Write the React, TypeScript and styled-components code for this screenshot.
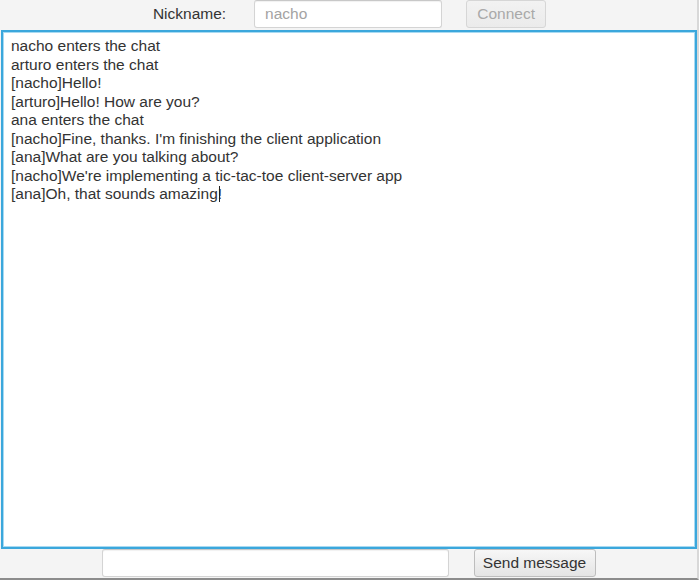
import React from "react";
import styled, { createGlobalStyle } from "styled-components";

const Global = createGlobalStyle`
  html, body { margin: 0; padding: 0; background: #f4f4f4; }
  body { font-family: "Liberation Sans", Arial, sans-serif; }
  * { box-sizing: border-box; }
`;

const Window = styled.div`
  width: 699px;
  height: 580px;
  display: flex;
  flex-direction: column;
  background: #f4f4f4;
  border-bottom: 2px solid #8c8c8c;
  border-right: 2px solid #d8d8d8;
  overflow: hidden;
`;

const Bar = styled.div<{ $h: number }>`
  height: ${(p) => p.$h}px;
  display: flex;
  justify-content: center;
  align-items: flex-start;
  flex-shrink: 0;
`;

const Label = styled.span`
  font-size: 15.5px;
  color: #333;
  line-height: 28px;
  margin-right: 28px;
  padding-left: 2px;
`;

const Field = styled.div<{ $w: number; $muted?: boolean }>`
  width: ${(p) => p.$w}px;
  height: 28px;
  background: #fff;
  border: 1px solid #d4d4d4;
  border-top-color: #c8c8c8;
  border-radius: 3px;
  box-shadow: inset 0 1px 1px rgba(0, 0, 0, 0.06);
  font-size: 15.5px;
  color: ${(p) => (p.$muted ? "#a3a3a3" : "#333")};
  line-height: 26px;
  padding: 0 10px;
`;

const Button = styled.div<{ $w: number; $disabled?: boolean; $ml: number }>`
  width: ${(p) => p.$w}px;
  height: 28px;
  margin-left: ${(p) => p.$ml}px;
  border: 1px solid ${(p) => (p.$disabled ? "#d6d6d6" : "#bdbdbd")};
  border-radius: 3px;
  background: ${(p) =>
    p.$disabled
      ? "linear-gradient(#f2f2f2, #ebebeb)"
      : "linear-gradient(#f7f7f7, #e4e4e4)"};
  font-size: 15.5px;
  color: ${(p) => (p.$disabled ? "#a9a9a9" : "#333")};
  line-height: 26px;
  text-align: center;
`;

const ChatArea = styled.div`
  height: 519px;
  margin: 0 0 0 1px;
  width: 696px;
  flex-shrink: 0;
  background: #fff;
  border: 2px solid #3ba7dc;
  box-shadow: inset 0 0 0 1px #a8daf2;
  padding: 5px 8px;
  font-size: 15.5px;
  line-height: 18.5px;
  color: #333;
`;

const Line = styled.div`
  white-space: pre;
`;

const Caret = styled.span`
  display: inline-block;
  width: 1px;
  height: 16px;
  background: #222;
  vertical-align: -3px;
  margin-left: -3px;
`;

const lines = [
  "nacho enters the chat",
  "arturo enters the chat",
  "[nacho]Hello!",
  "[arturo]Hello! How are you?",
  "ana enters the chat",
  "[nacho]Fine, thanks. I'm finishing the client application",
  "[ana]What are you talking about?",
  "[nacho]We're implementing a tic-tac-toe client-server app",
];

export default function App() {
  return (
    <>
      <Global />
      <Window>
        <Bar $h={30}>
          <Label>Nickname:</Label>
          <Field $w={188} $muted>
            nacho
          </Field>
          <Button $w={80} $ml={24} $disabled>
            Connect
          </Button>
        </Bar>
        <ChatArea>
          {lines.map((l, i) => (
            <Line key={i}>{l}</Line>
          ))}
          <Line>
            [ana]Oh, that sounds amazing!
            <Caret />
          </Line>
        </ChatArea>
        <Bar $h={29}>
          <Field $w={347} />
          <Button $w={122} $ml={25}>
            Send message
          </Button>
        </Bar>
      </Window>
    </>
  );
}
